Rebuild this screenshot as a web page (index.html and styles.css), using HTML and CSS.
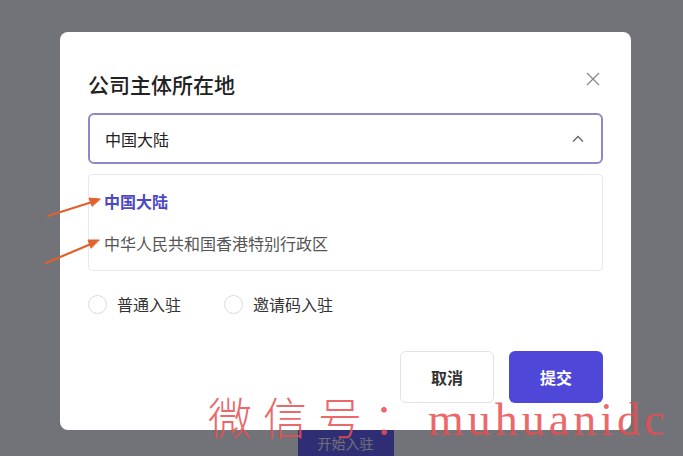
FILE: index.html
```html
<!DOCTYPE html>
<html lang="zh-CN">

<head>
    <meta charset="UTF-8">
    <meta name="viewport" content="width=device-width, initial-scale=1.0">
    <title>入驻</title>
    <link rel="stylesheet" href="styles.css">
</head>

<body>
    <!-- page behind the mask -->
    <div class="page">
        <button class="start">开始入驻</button>
    </div>

    <div class="mask"></div>

    <!-- dialog -->
    <div class="dialog">
        <div class="dialog-head">
            <h2 class="dialog-title">公司主体所在地</h2>
            <span class="close">
                <svg width="14" height="14" viewBox="0 0 14 14">
                    <path d="M1 1 L13 13 M13 1 L1 13" stroke="#8a8a8a" stroke-width="1.3" fill="none" />
                </svg>
            </span>
        </div>

        <div class="select">
            <span>中国大陆</span>
            <svg width="12" height="8" viewBox="0 0 12 8">
                <path d="M1 6.5 L6 1.5 L11 6.5" stroke="#666" stroke-width="1.3" fill="none" />
            </svg>
        </div>

        <ul class="options">
            <li class="active">中国大陆</li>
            <li>中华人民共和国香港特别行政区</li>
        </ul>

        <div class="radios">
            <label class="radio"><span class="dot"></span>普通入驻</label>
            <label class="radio"><span class="dot"></span>邀请码入驻</label>
        </div>

        <div class="actions">
            <button class="btn cancel">取消</button>
            <button class="btn submit">提交</button>
        </div>
    </div>

    <!-- annotation arrows -->
    <svg class="arrows" width="683" height="456" viewBox="0 0 683 456">
        <g stroke="#e0612e" stroke-width="2.2" fill="#e0612e" stroke-linecap="round">
            <line x1="48" y1="216" x2="92" y2="202" />
            <polygon points="100,199 89,198 92,206" stroke-width="1" />
            <line x1="46" y1="263" x2="91" y2="244" />
            <polygon points="99,240 88,240 91,248" stroke-width="1" />
        </g>
    </svg>

    <div class="watermark"><span class="wm-cn">微信号：</span>muhuanidc</div>
</body>

</html>
```

FILE: styles.css
```css
* {
    margin: 0;
    padding: 0;
    box-sizing: border-box;
}

body {
    width: 683px;
    height: 456px;
    overflow: hidden;
    position: relative;
    font-family: "Noto Sans CJK SC", "Noto Sans", sans-serif;
    background-color: #f4f4f6;
}

.page {
    display: flex;
    justify-content: center;
    padding-top: 426px;
    padding-left: 8px;
}

.start {
    width: 96px;
    height: 34px;
    border: none;
    border-radius: 4px;
    background-color: #3c37e8;
    color: #e8e8f4;
    font-family: inherit;
    font-size: 14px;
}

.mask {
    position: absolute;
    inset: 0;
    background-color: rgba(40, 42, 50, 0.64);
}

.dialog {
    position: absolute;
    top: 32px;
    left: 60px;
    width: 571px;
    height: 398px;
    padding: 38px 28px 27px;
    background-color: #fff;
    border-radius: 8px;
}

.dialog-head {
    display: flex;
    justify-content: space-between;
    align-items: flex-start;
}

.dialog-title {
    font-size: 21px;
    font-weight: 500;
    line-height: 28px;
    color: #222;
}

.close {
    display: flex;
    margin-top: 2px;
    margin-right: 3px;
}

.select {
    display: flex;
    justify-content: space-between;
    align-items: center;
    height: 51px;
    margin-top: 15px;
    padding: 0 17px 0 15px;
    border: 2px solid #8d89c9;
    border-radius: 6px;
    font-size: 16px;
    color: #222;
}

.options {
    list-style: none;
    margin-top: 10px;
    height: 97px;
    padding: 5px 0;
    border: 1px solid #e9e9ec;
    border-radius: 4px;
}

.options li {
    height: 42px;
    line-height: 42px;
    padding-left: 15px;
    font-size: 16px;
    color: #555;
}

.options li.active {
    color: #4d48c4;
    font-weight: 700;
}

.radios {
    display: flex;
    gap: 43px;
    margin-top: 23px;
    height: 20px;
}

.radio {
    display: flex;
    align-items: center;
    gap: 10px;
    font-size: 16px;
    color: #333;
}

.dot {
    width: 19px;
    height: 19px;
    border: 1px solid #dcdcdf;
    border-radius: 50%;
    background-color: #fff;
}

.actions {
    display: flex;
    justify-content: flex-end;
    gap: 15px;
    margin-top: 37px;
}

.btn {
    width: 94px;
    height: 52px;
    border-radius: 6px;
    font-family: inherit;
    font-size: 16px;
    font-weight: 700;
}

.cancel {
    background-color: #fff;
    border: 1px solid #e3e3e6;
    color: #333;
}

.submit {
    background-color: #4f47d8;
    border: none;
    color: #fff;
}

.arrows {
    position: absolute;
    top: 0;
    left: 0;
}

.watermark {
    position: absolute;
    left: 208px;
    top: 386px;
    font-family: "Liberation Serif", "Noto Sans CJK SC", serif;
    font-size: 46px;
    font-weight: 300;
    line-height: 60px;
    letter-spacing: 4px;
    color: rgba(232, 78, 80, 0.85);
    white-space: nowrap;
}

.wm-cn {
    font-family: "Noto Sans CJK SC", sans-serif;
    font-size: 44px;
    font-weight: 300;
    letter-spacing: 11px;
}
```
